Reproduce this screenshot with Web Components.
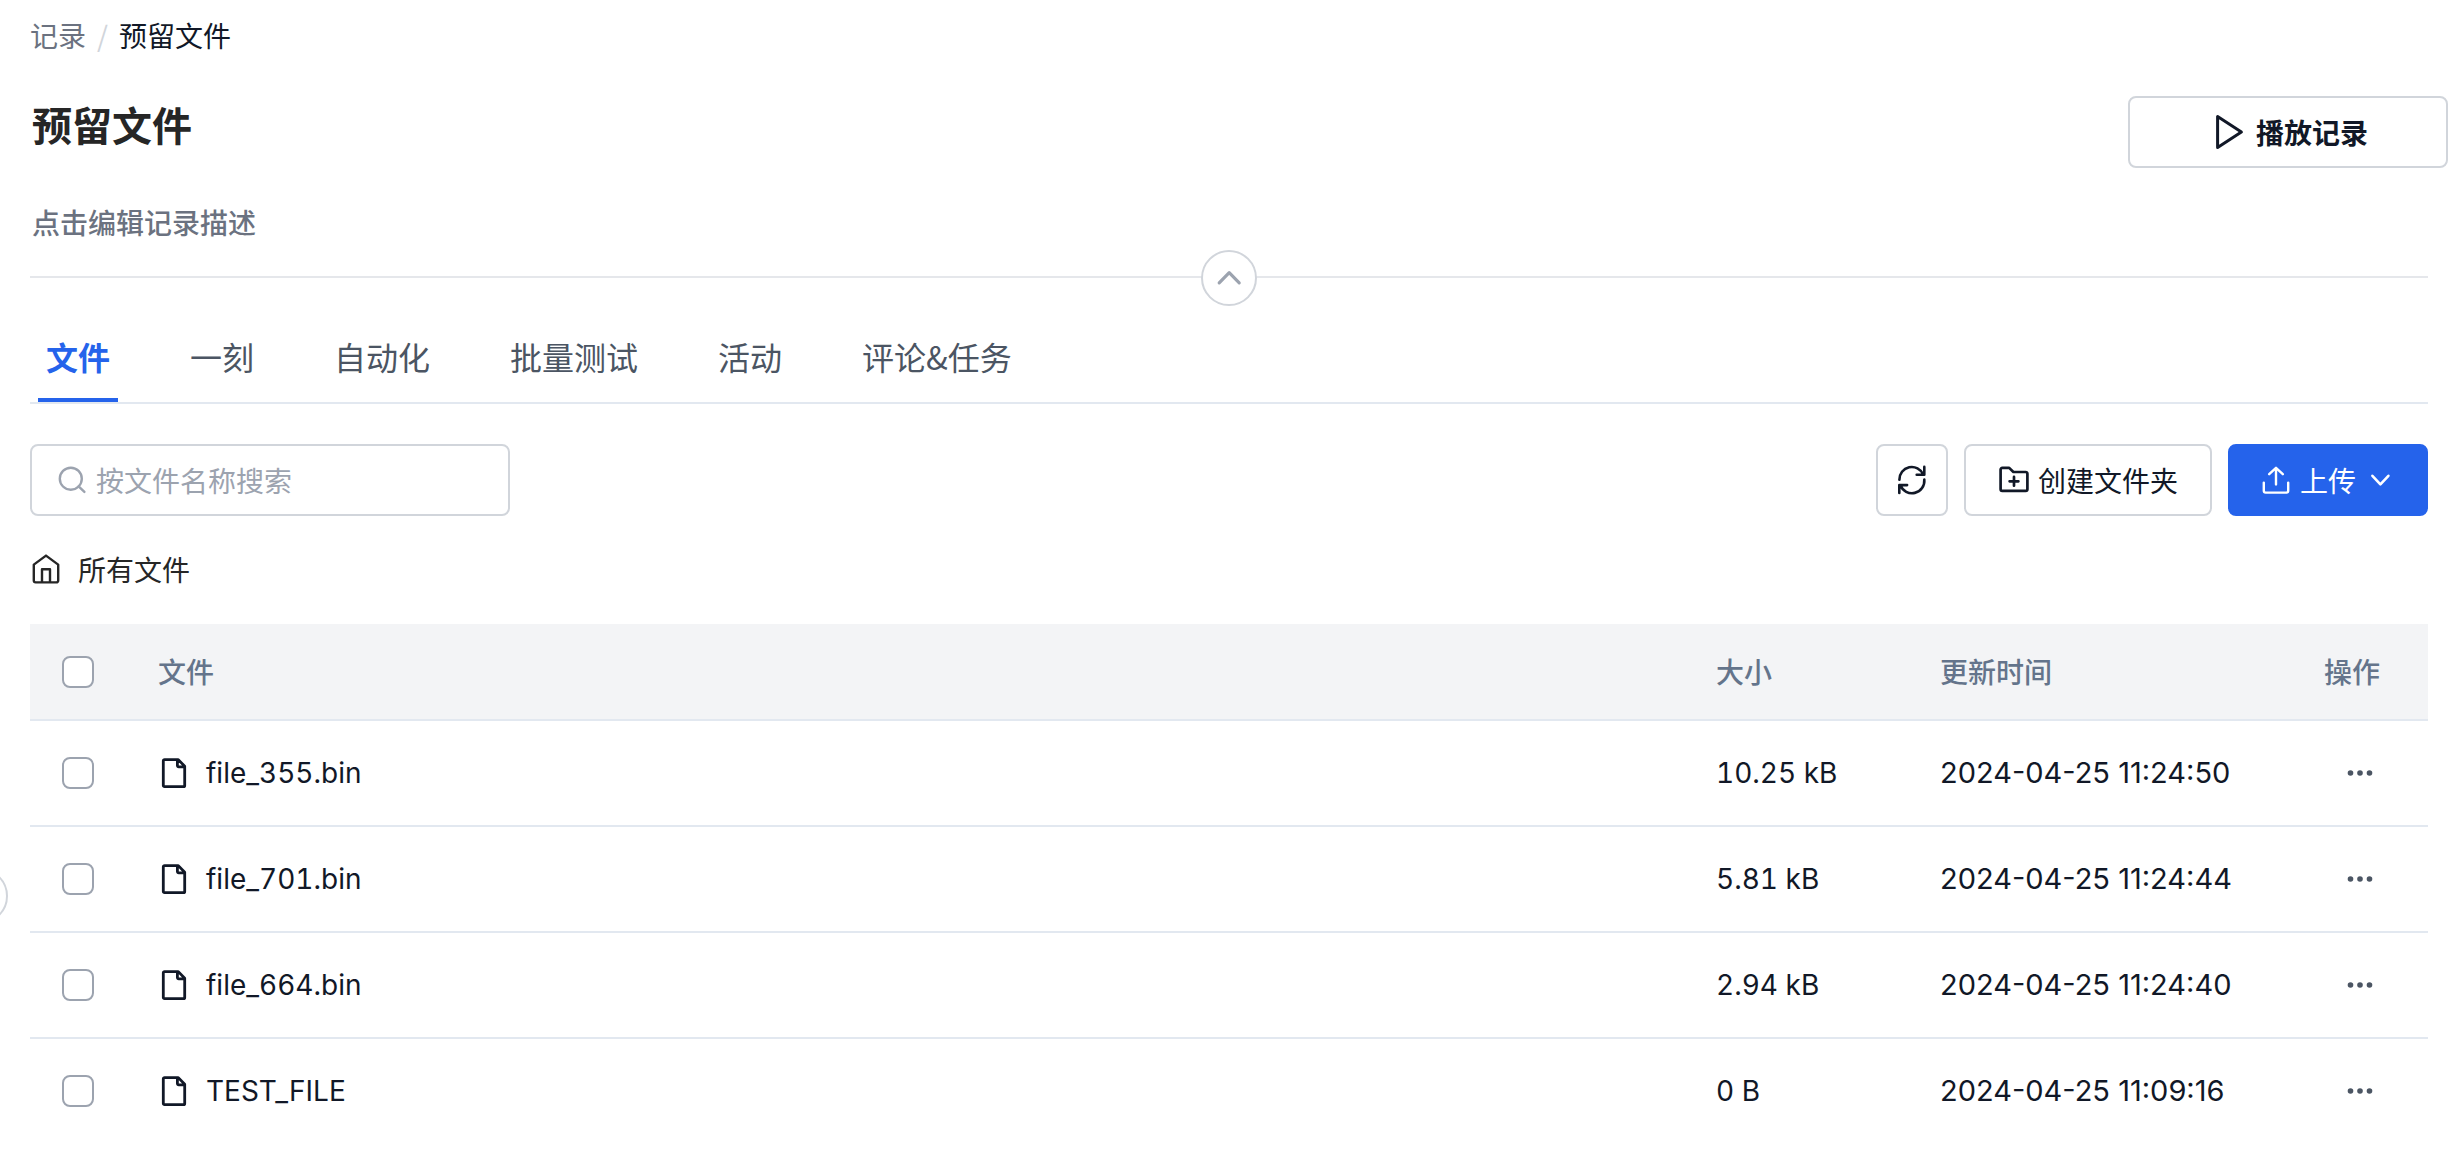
<!DOCTYPE html>
<html lang="zh-CN">
<head>
<meta charset="utf-8">
<title>预留文件</title>
<style>
  body {
    margin: 0;
    min-height: 100vh;
    background: #fff;
    color: #111827;
    font: 400 28px/40px "Noto Sans CJK SC", Inter, sans-serif;
    --latin: Inter, "Noto Sans CJK SC", sans-serif;
    --line: #e2e8f0;
    --outline: #d1d5db;
    --muted: #6b7280;
    --primary: #2563eb;
  }
</style>
</head>
<body>
<record-page>
  <record-breadcrumb slot="breadcrumb" parent="记录">预留文件</record-breadcrumb>
  <record-header slot="header">
    预留文件
    <span slot="description">点击编辑记录描述</span>
    <ui-button slot="action" wide icon="play">播放记录</ui-button>
  </record-header>
  <section-divider slot="header"></section-divider>
  <tab-bar items="文件,一刻,自动化,批量测试,活动,评论&amp;任务"></tab-bar>
  <file-toolbar>
    <search-box slot="search" placeholder="按文件名称搜索"></search-box>
    <ui-button square icon="refresh" label="刷新"></ui-button>
    <ui-button icon="folder">创建文件夹</ui-button>
    <ui-button primary icon="upload" trailing="down">上传</ui-button>
  </file-toolbar>
  <path-bar>所有文件</path-bar>
  <file-table></file-table>
  <sidebar-toggle slot="overlay"></sidebar-toggle>
</record-page>

<script>
/* name: [box size, stroke width, shapes] */
const ICONS = {
  play: [40, 3, '<path d="M9.600 4.600v31L33.400 20Z"/>'],
  refresh: [32, 2.6, '<path d="M3.400 15.800A12.400 12.400 0 0 1 27.200 10.600M28.300 2.900v7.900h-7.600M28.300 15.600A12.400 12.400 0 0 1 4.400 21.300M3.300 28.900v-7.800h7.800"/>'],
  folder: [32, 2.7, '<path d="M2.600 25.200V5.600A1.700 1.700 0 0 1 4.300 3.900H11.200l4.200 4.100H27.700A1.700 1.700 0 0 1 29.400 9.700V25.200A1.700 1.700 0 0 1 27.700 26.900H4.300A1.700 1.700 0 0 1 2.600 25.200ZM16 12.900v8.800M11.600 17.300h8.800"/>'],
  upload: [32, 2.4, '<path d="M16 20.400V4M9.200 10.200 16 3.800l6.800 6.400M3.800 18.600v8.200c0 1.100.7 1.800 1.800 1.800h20.800c1.100 0 1.800-.7 1.800-1.800v-8.200"/>'],
  down: [32, 2.6, '<path d="m8.400 11.800 8 8.500 8-8.500"/>'],
  up: [32, 3.2, '<path d="M6.200 20.800 16.200 10.600l10 10.200"/>'],
  search: [32, 2.4, '<circle cx="14.800" cy="14.700" r="11"/><path d="m22.600 22.300 5.800 5.600"/>'],
  home: [32, 2.4, '<path d="M3.800 11.600 16 2.600l12.200 9V27.600A1.800 1.800 0 0 1 26.400 29.400H5.600A1.800 1.800 0 0 1 3.800 27.600ZM12 29V16.200h8V29"/>'],
  file: [32, 2.8, '<path d="M6.500 2.600H20.300L26.700 9.300V28.500A1.200 1.200 0 0 1 25.500 29.700H6.500A1.200 1.200 0 0 1 5.300 28.500V3.800A1.200 1.200 0 0 1 6.500 2.600ZM19.400 2.800V8.600A1.300 1.300 0 0 0 20.700 9.900H26.400"/>']
};
const svg = (name) => {
  const [size, stroke, shapes] = ICONS[name];
  return `<svg width="${size}" height="${size}" viewBox="0 0 ${size} ${size}" fill="none" stroke="currentColor" stroke-width="${stroke}" stroke-linecap="round" stroke-linejoin="round" aria-hidden="true">${shapes}</svg>`;
};

const RESET = `
  *, *::before { box-sizing: border-box; }
  :host { display: block; }
  :host([hidden]) { display: none; }
  button, input { font: inherit; color: inherit; margin: 0; }
  button { cursor: pointer; }
  svg { display: block; flex: none; }
`;

class Base extends HTMLElement {
  connectedCallback() {
    if (this.shadowRoot) return;
    this.attachShadow({ mode: 'open' }).innerHTML = `<style>${RESET}${this.styles()}</style>${this.markup()}`;
  }
}

customElements.define('record-page', class extends Base {
  styles() { return `
    :host { position: relative; overflow: hidden; min-height: 100vh; }
    header { padding-top: 15px; }
    main { padding: 0 34px 0 30px; }
  `; }
  markup() { return `
    <header><slot name="breadcrumb"></slot><slot name="header"></slot></header>
    <main><slot></slot></main>
    <slot name="overlay"></slot>`; }
});

customElements.define('record-breadcrumb', class extends Base {
  styles() { return `
    :host { padding: 0 30px; }
    nav { display: flex; gap: 11px; }
    a { color: var(--muted); text-decoration: none; }
    i { font-style: normal; color: var(--outline); }
  `; }
  markup() { return `<nav><a href="#">${this.getAttribute('parent')}</a><i>/</i><span aria-current="page"><slot></slot></span></nav>`; }
});

customElements.define('record-header', class extends Base {
  styles() { return `
    :host { display: flex; justify-content: space-between; align-items: flex-start; padding: 41px 14px 34px 32px; }
    h1 { margin: 0; font-size: 40px; line-height: 56px; font-weight: 600; color: #262626; }
    p { margin: 50px 0 0; font-weight: 500; color: var(--muted); }
  `; }
  markup() { return `<div><h1><slot></slot></h1><p><slot name="description"></slot></p></div><slot name="action"></slot>`; }
});

customElements.define('section-divider', class extends Base {
  styles() { return `
    :host { position: relative; margin: 0 34px 0 30px; border-top: 2px solid #e5e7eb; }
    button {
      position: absolute; left: 50%; top: -28px; margin-left: -28px;
      width: 56px; height: 56px; padding: 0; display: grid; place-items: center;
      border: 2px solid var(--outline); border-radius: 50%; background: #fff; color: #9ca3af;
    }
  `; }
  markup() { return `<button type="button" aria-label="收起">${svg('up')}</button>`; }
});

customElements.define('tab-bar', class extends Base {
  styles() { return `
    div { display: flex; gap: 64px; padding: 54px 8px 0; border-bottom: 2px solid var(--line); }
    button {
      padding: 0 8px 18px; border: 0; border-bottom: 4px solid transparent; background: none;
      font-size: 32px; line-height: 48px; color: #4b5563;
    }
    button[aria-selected="true"] { color: var(--primary); border-color: var(--primary); font-weight: 600; }
  `; }
  markup() {
    const tabs = this.getAttribute('items').split(',').map((t, i) =>
      `<button type="button" role="tab" aria-selected="${i === 0}">${t.replace('&', '&amp;')}</button>`);
    return `<div role="tablist">${tabs.join('')}</div>`;
  }
  connectedCallback() {
    super.connectedCallback();
    this.shadowRoot.addEventListener('click', (e) => {
      const tab = e.target.closest('button');
      if (!tab) return;
      for (const b of this.shadowRoot.querySelectorAll('button')) b.setAttribute('aria-selected', b === tab);
    });
  }
});

customElements.define('file-toolbar', class extends Base {
  styles() { return `
    :host { display: flex; gap: 16px; margin-top: 40px; }
    slot[name] { display: block; flex: 1; }
  `; }
  markup() { return `<slot name="search"></slot><slot></slot>`; }
});

customElements.define('search-box', class extends Base {
  styles() { return `
    label {
      display: flex; align-items: center; gap: 8px; width: 480px; max-width: 100%; height: 72px; padding: 0 24px;
      border: 2px solid var(--outline); border-radius: 8px; color: #9ca3af;
    }
    input { flex: 1; min-width: 0; height: 44px; padding: 0; border: 0; outline: 0; background: none; color: #111827; }
    input::placeholder { color: #9ca3af; opacity: 1; }
  `; }
  markup() { return `<label>${svg('search')}<input type="text" placeholder="${this.getAttribute('placeholder')}"></label>`; }
});

customElements.define('ui-button', class extends Base {
  styles() { return `
    :host { flex: none; }
    button {
      display: flex; align-items: center; justify-content: center; gap: 8px; height: 72px; padding: 0 32px 1px;
      border: 2px solid var(--outline); border-radius: 8px; background: #fff; white-space: nowrap;
    }
    :host([square]) button { width: 72px; padding: 0; }
    :host([wide]) button { width: 320px; font-weight: 600; }
    :host([primary]) button { padding: 0 30px 1px; border-color: var(--primary); background: var(--primary); color: #fff; }
  `; }
  markup() {
    const label = this.getAttribute('label');
    const trailing = this.getAttribute('trailing');
    const text = this.hasAttribute('square') ? '' : '<span><slot></slot></span>';
    return `<button type="button"${label ? ` aria-label="${label}"` : ''}>${svg(this.getAttribute('icon'))}${text}${trailing ? svg(trailing) : ''}</button>`;
  }
});

customElements.define('path-bar', class extends Base {
  styles() { return `
    nav { display: flex; margin: 33px 0 35px; }
    a { display: flex; align-items: center; gap: 16px; color: #262626; text-decoration: none; }
  `; }
  markup() { return `<nav><a href="#">${svg('home')}<slot></slot></a></nav>`; }
});

const FILES = [
  ['file_355.bin', '10.25 kB', '2024-04-25 11:24:50'],
  ['file_701.bin', '5.81 kB', '2024-04-25 11:24:44'],
  ['file_664.bin', '2.94 kB', '2024-04-25 11:24:40'],
  ['TEST_FILE', '0 B', '2024-04-25 11:09:16']
];

customElements.define('file-table', class extends Base {
  styles() { return `
    table { width: 100%; table-layout: fixed; border-collapse: separate; border-spacing: 0; }
    th, td { height: 104px; padding: 0 32px; text-align: left; vertical-align: middle; box-sizing: content-box; white-space: nowrap; }
    td { font-family: var(--latin); font-variant-numeric: tabular-nums; }
    td:nth-child(4) { font-size: 29px; font-variant-numeric: normal; }
    th { height: 93px; padding-bottom: 2px; background: #f3f4f6; color: #64748b; font-weight: 500; border-bottom: 2px solid var(--line); }
    th.check { height: 95px; padding-bottom: 0; }
    tr:not(:last-child) td { border-bottom: 2px solid var(--line); }
    .check { width: 32px; } .size { width: 160px; } .time { width: 320px; } .ops { width: 72px; }
    .name { display: flex; align-items: center; gap: 16px; }
    input {
      appearance: none; display: block; width: 32px; height: 32px;
      border: 2px solid #9ca3af; border-radius: 8px; background: #fff;
    }
    input:checked { background: var(--primary); border-color: var(--primary); }
    button { display: grid; place-items: center; width: 72px; height: 40px; padding: 0; border: 0; background: none; color: #4b5563; }
  `; }
  markup() {
    const rows = FILES.map(([name, size, time], i) => `
      <tr>
        <td><input type="checkbox" aria-labelledby="name-${i}"></td>
        <td><span class="name">${svg('file')}<span id="name-${i}">${name}</span></span></td>
        <td>${size}</td>
        <td>${time}</td>
        <td><button type="button" aria-label="操作"><svg width="32" height="32" viewBox="0 0 32 32" fill="currentColor" aria-hidden="true"><circle cx="6.500" cy="16" r="2.800"/><circle cx="16" cy="16" r="2.800"/><circle cx="25.500" cy="16" r="2.800"/></svg></button></td>
      </tr>`).join('');
    return `
      <table>
        <thead><tr>
          <th class="check"><input type="checkbox" aria-label="全选"></th>
          <th>文件</th><th class="size">大小</th><th class="time">更新时间</th><th class="ops">操作</th>
        </tr></thead>
        <tbody>${rows}</tbody>
      </table>`;
  }
});

customElements.define('sidebar-toggle', class extends Base {
  styles() { return `
    :host { position: absolute; left: -48px; top: 868px; }
    button { display: block; width: 56px; height: 56px; border: 2px solid var(--outline); border-radius: 50%; background: #fff; }
  `; }
  markup() { return `<button type="button" aria-label="展开侧栏"></button>`; }
});
</script>
</body>
</html>
